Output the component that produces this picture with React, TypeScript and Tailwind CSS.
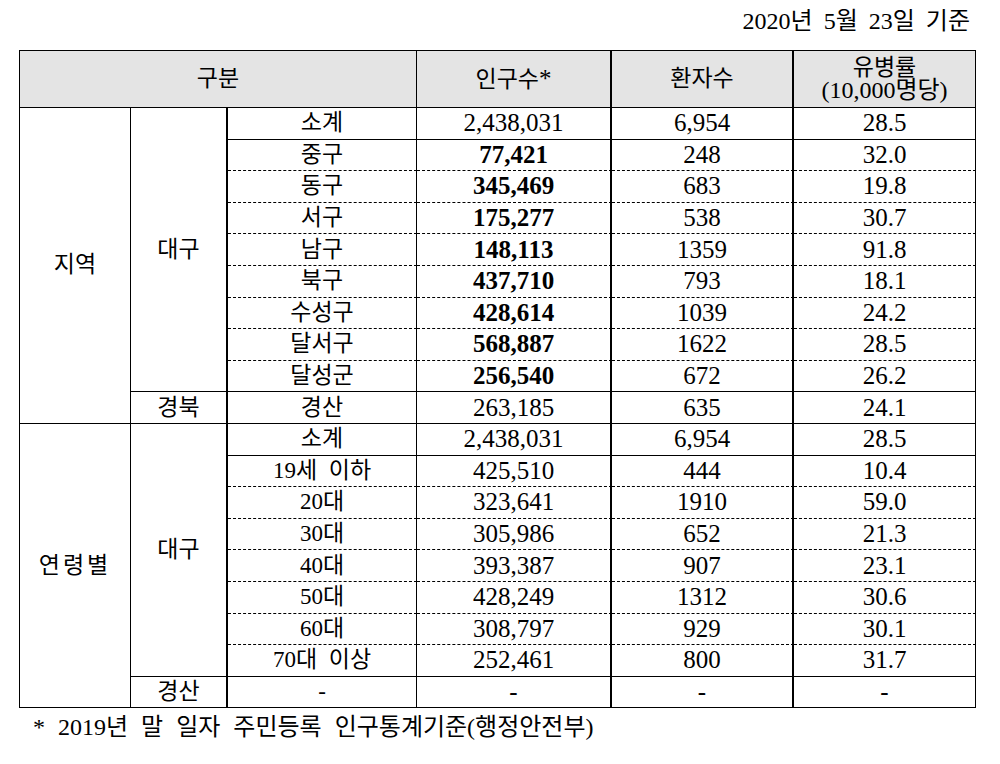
import React from "react";

type Row = {
  sub: string;
  pop: string;
  cases: string;
  rate: string;
  bold?: boolean;
  dashed?: boolean;
};

const ROWS: Row[] = [
  { sub: "소계", pop: "2,438,031", cases: "6,954", rate: "28.5" },
  { sub: "중구", pop: "77,421", cases: "248", rate: "32.0", bold: true, dashed: true },
  { sub: "동구", pop: "345,469", cases: "683", rate: "19.8", bold: true, dashed: true },
  { sub: "서구", pop: "175,277", cases: "538", rate: "30.7", bold: true, dashed: true },
  { sub: "남구", pop: "148,113", cases: "1359", rate: "91.8", bold: true, dashed: true },
  { sub: "북구", pop: "437,710", cases: "793", rate: "18.1", bold: true, dashed: true },
  { sub: "수성구", pop: "428,614", cases: "1039", rate: "24.2", bold: true, dashed: true },
  { sub: "달서구", pop: "568,887", cases: "1622", rate: "28.5", bold: true, dashed: true },
  { sub: "달성군", pop: "256,540", cases: "672", rate: "26.2", bold: true },
  { sub: "경산", pop: "263,185", cases: "635", rate: "24.1" },
  { sub: "소계", pop: "2,438,031", cases: "6,954", rate: "28.5" },
  { sub: "19세 이하", pop: "425,510", cases: "444", rate: "10.4", dashed: true },
  { sub: "20대", pop: "323,641", cases: "1910", rate: "59.0", dashed: true },
  { sub: "30대", pop: "305,986", cases: "652", rate: "21.3", dashed: true },
  { sub: "40대", pop: "393,387", cases: "907", rate: "23.1", dashed: true },
  { sub: "50대", pop: "428,249", cases: "1312", rate: "30.6", dashed: true },
  { sub: "60대", pop: "308,797", cases: "929", rate: "30.1", dashed: true },
  { sub: "70대 이상", pop: "252,461", cases: "800", rate: "31.7" },
  { sub: "-", pop: "-", cases: "-", rate: "-" },
];

function leadCells(i: number) {
  // rowspan cells for the first two columns
  if (i === 0)
    return (
      <>
        <td rowSpan={10} className="border-r border-b border-black">
          지역
        </td>
        <td rowSpan={9} className="border-r-2 border-b border-black">
          대구
        </td>
      </>
    );
  if (i === 9)
    return <td className="border-r-2 border-b border-black">경북</td>;
  if (i === 10)
    return (
      <>
        <td rowSpan={9} className="border-r border-b border-black tracking-[3px]">
          연령별
        </td>
        <td rowSpan={8} className="border-r-2 border-b border-black">
          대구
        </td>
      </>
    );
  if (i === 18)
    return <td className="border-r-2 border-b border-black">경산</td>;
  return null;
}

export default function App() {
  return (
    <div className="w-[1000px] h-[764px] bg-white text-black text-[23px] font-['Liberation_Serif','Noto_Sans_CJK_KR',serif]">
      <div className="flex justify-end items-center h-[50px] pr-[30px] pb-[8px] text-[24px]">
        <span className="[word-spacing:5px]">2020년 5월 23일 기준</span>
      </div>

      <table className="ml-[19px] w-[956px] table-fixed border-separate border-spacing-0 border-l border-t border-black text-center">
        <colgroup>
          <col className="w-[111px]" />
          <col className="w-[97px]" />
          <col className="w-[189px]" />
          <col className="w-[195px]" />
          <col className="w-[182px]" />
          <col className="w-[182px]" />
        </colgroup>
        <thead>
          <tr className="h-[57px] bg-[#e4e4e4]">
            <th colSpan={3} className="font-normal border-r border-b border-black">
              구분
            </th>
            <th className="font-normal border-r-2 border-b border-black">
              인구수<span className="text-[25px]">*</span>
            </th>
            <th className="font-normal border-r-2 border-b border-black">환자수</th>
            <th className="font-normal border-r border-b border-black">
              <div className="leading-[22px]">유병률</div>
              <div className="leading-[22px] text-[24px]">(10,000명당)</div>
            </th>
          </tr>
        </thead>
        <tbody>
          {ROWS.map((r, i) => {
            const line = r.dashed
              ? "border-b border-black [border-bottom-style:dashed]"
              : "border-b border-black";
            return (
              <tr key={i} className="h-[31.6px] leading-[26px]">
                {leadCells(i)}
                <td className={`border-r ${line} [word-spacing:6px]`}>
                  {i === 18 ? "-" : r.sub}
                </td>
                <td className={`border-r-2 ${line} text-[25px] ${r.bold ? "font-bold" : ""}`}>
                  {r.pop}
                </td>
                <td className={`border-r-2 ${line} text-[25px]`}>{r.cases}</td>
                <td className={`border-r ${line} text-[25px]`}>{r.rate}</td>
              </tr>
            );
          })}
        </tbody>
      </table>

      <p className="pl-[33px] pt-[1px] text-[24px] [word-spacing:7px]">
        * 2019년 말 일자 주민등록 인구통계기준(행정안전부)
      </p>
    </div>
  );
}
